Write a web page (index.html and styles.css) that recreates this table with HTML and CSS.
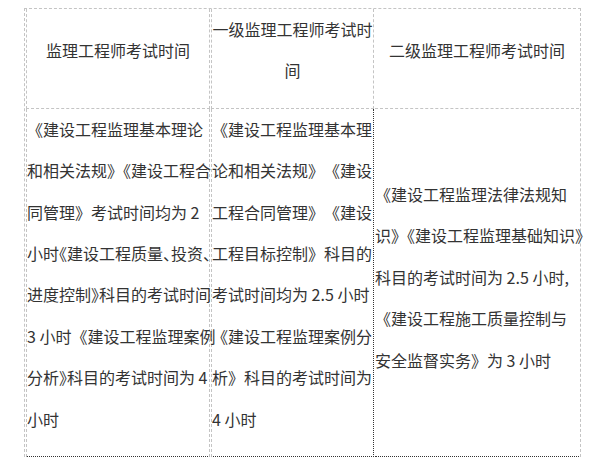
FILE: index.html
```html
<!DOCTYPE html>
<html lang="zh-CN">
<head>
<meta charset="utf-8">
<title>监理工程师考试时间</title>
<link rel="stylesheet" href="styles.css">
</head>
<body>
<table class="exam">
  <tr class="head">
    <td class="cell c-a"><p>监理工程师考试时间</p></td>
    <td class="cell c-b"><p>一级监理工程师考试时<br>间</p></td>
    <td class="cell c-c"><p>二级监理工程师考试时间</p></td>
  </tr>
  <tr class="main">
    <td class="cell c-a"><p>《建设工程监理基本理论<br>和相关法规》《建设工程合<br>同管理》考试时间均为 2<br><span class="tight">小时《建设工程质量、投资、</span><br><span class="tight">进度控制》科目的考试时间</span><br>3 小时《建设工程监理案例<br><span class="tight">分析》科目的考试时间为 4</span><br>小时</p></td>
    <td class="cell c-b"><p>《建设工程监理基本理<br><span class="wide">论和相关法规》《建设</span><br><span class="wide">工程合同管理》《建设</span><br>工程目标控制》科目的<br>考试时间均为 2.5 小时<br>《建设工程监理案例分<br>析》科目的考试时间为<br>4 小时</p></td>
    <td class="cell c-c"><p>《建设工程监理法律法规知<br>识》《建设工程监理基础知识》<br>科目的考试时间为 2.5 小时,<br>《建设工程施工质量控制与<br>安全监督实务》为 3 小时</p></td>
  </tr>
</table>
</body>
</html>
```

FILE: styles.css
```css
html, body {
  margin: 0;
  padding: 0;
  background: #ffffff;
}

body {
  padding: 8px 0 0 24px;
  font-family: "Noto Sans CJK SC", "Noto Sans", sans-serif;
  font-size: 16px;
  color: #333333;
}

.exam {
  table-layout: fixed;
  width: 557px;
  border-collapse: separate;
  border-spacing: 1px 0;
  border-top: 1px dashed #c4c4c4;
  border-left: 1px dashed #c4c4c4;
  border-right: 1px dashed #c4c4c4;
}

.cell {
  padding: 0;
  line-height: 41.4px;
  white-space: nowrap;
  vertical-align: top;
}

.cell p {
  margin: 0 0 16px;
}

.tight {
  font-feature-settings: "halt";
}

.wide {
  text-spacing-trim: space-all;
}

.c-a {
  width: 182px;
  border-left: 1px dashed #c4c4c4;
  border-right: 1px dashed #c4c4c4;
}

.c-b {
  width: 161px;
  border-left: 1px dashed #c4c4c4;
  border-right: 1px dashed #c4c4c4;
}

.c-c {
  width: 204px;
}

.head .cell {
  text-align: center;
  vertical-align: middle;
  border-bottom: 1px dashed #c4c4c4;
}

.main .cell {
  text-align: left;
  border-bottom: 1px dotted #333333;
}

.main .c-b {
  border-right: 1px dotted #333333;
}

.main .c-c {
  vertical-align: middle;
  padding-top: 6px;
}
```
